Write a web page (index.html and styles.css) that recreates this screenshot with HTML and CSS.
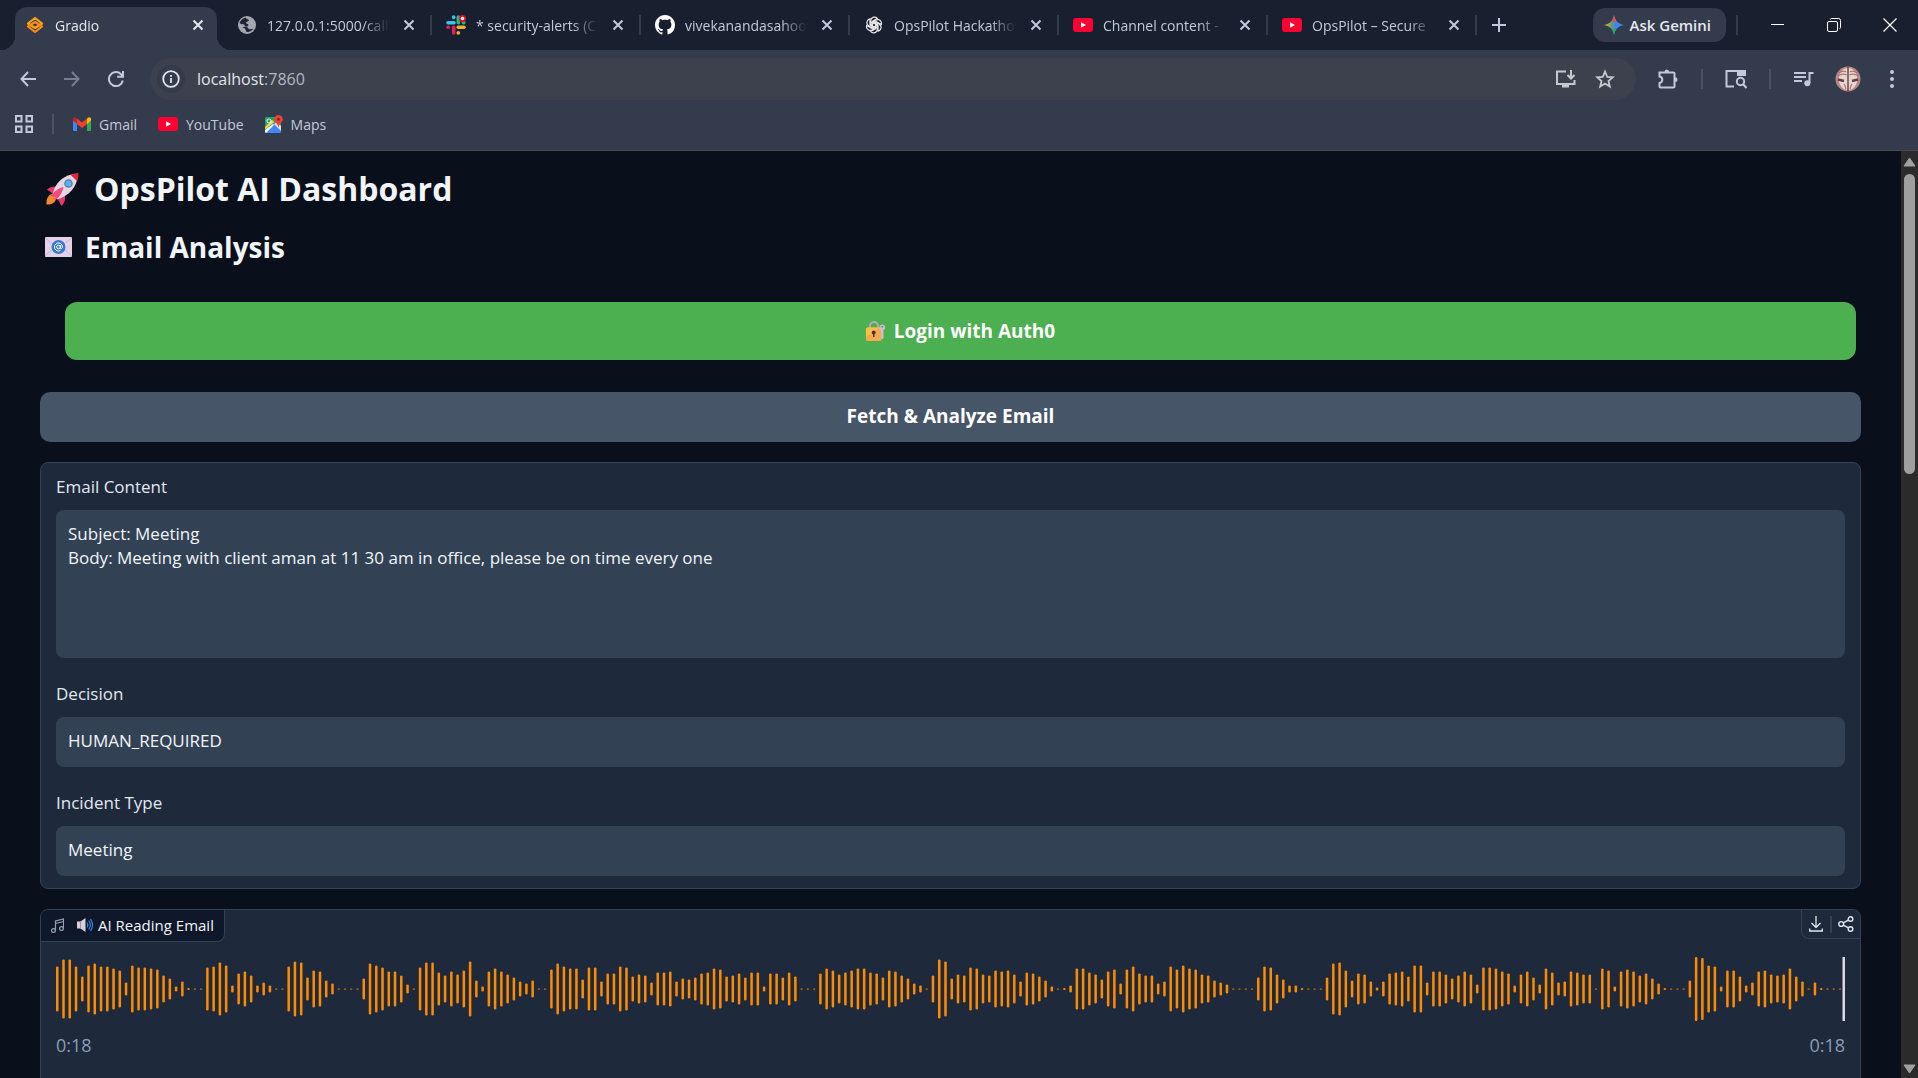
FILE: index.html
```
<!DOCTYPE html>
<html lang="en">
<head>
    <meta charset="UTF-8">
    <meta name="viewport" content="width=device-width, initial-scale=1.0">
    <title>Gradio</title>
    <link rel="stylesheet" href="styles.css">
</head>
<body>
<svg class="defs" aria-hidden="true">
    <symbol id="i-close" viewBox="0 0 12 12"><path d="M1.5 1.5l9 9M10.5 1.5l-9 9" fill="none" stroke="currentColor" stroke-width="2"/></symbol>
    <symbol id="i-youtube" viewBox="0 0 20 14"><rect width="20" height="14" rx="3" fill="#ff0033"/><path d="M8 4.2v5.6L13 7z" fill="#fff"/></symbol>
</svg>

<header class="browser">
    <div class="tabstrip">
        <div class="tab active">
            <svg class="favicon" viewBox="0 0 20 20"><g fill="none" stroke-width="2.200" stroke-linejoin="round"><path d="M3 8.500l7-5.500 7 5.500-7 4.500z" stroke="#ffa50f"/><path d="M3 11.500L10 7l7 4.500-7 5.500z" stroke="#ff8c0a"/></g></svg>
            <span class="tab-title">Gradio</span>
            <button class="tab-close" aria-label="Close tab"><svg><use href="#i-close"/></svg></button>
        </div>
        <div class="tab">
            <svg class="favicon" viewBox="0 0 20 20"><circle cx="10" cy="10" r="9" fill="#a4a8ad"/><path d="M9 2.5c-3 .5-5.5 2.500-6.500 5.500 1.500 1.500 3 1 4.500 1.500 1 .5.5 2 2 2 1.500.2 2.500-.5 2.500-1.800-1-1.200-2.500-.7-2.500-2 .5-1.300 2.500-1 3-2.700C11.500 4 9 4.500 9 2.500zM5 12.500c1.500.3 3 .5 3.500 2 .3 1 .2 2 1.500 2.500 2.500.2 4.500-1 6-3-1.500-.5-2 .5-3.500.2-1.500-.5-1.200-1.700-3-2.200-1.500-.3-3-.2-4.500.5z" fill="#1d2636"/></svg>
            <span class="tab-title">127.0.0.1:5000/call</span>
            <button class="tab-close" aria-label="Close tab"><svg><use href="#i-close"/></svg></button>
        </div>
        <div class="tab">
            <svg class="favicon" viewBox="0 0 20 20"><g stroke-width="3.600" stroke-linecap="round" fill="none"><path d="M2 7.700h6" stroke="#36c5f0"/><path d="M7.700 2v.5" stroke="#36c5f0"/><path d="M12.300 2v5.700" stroke="#2eb67d"/><path d="M17.500 7.700h.3" stroke="#2eb67d"/><path d="M12.300 12.300h5.700" stroke="#ecb22e"/><path d="M12.300 17.700v.2" stroke="#ecb22e"/><path d="M7.700 12.300V18" stroke="#e01e5a"/><path d="M2 12.300h.3" stroke="#e01e5a"/></g><circle cx="16.500" cy="3.500" r="3.500" fill="#e3122b"/><circle cx="16.500" cy="3.500" r="1.700" fill="#fff"/></svg>
            <span class="tab-title">* security-alerts (C</span>
            <button class="tab-close" aria-label="Close tab"><svg><use href="#i-close"/></svg></button>
        </div>
        <div class="tab">
            <svg class="favicon" viewBox="0 0 16 16"><path fill="#fff" d="M8 0C3.580 0 0 3.580 0 8c0 3.540 2.290 6.530 5.470 7.590.4.070.55-.17.55-.38 0-.19-.01-.82-.01-1.490-2.010.37-2.530-.49-2.690-.94-.09-.23-.48-.94-.82-1.130-.28-.15-.68-.52-.01-.53.63-.01 1.080.58 1.230.82.72 1.210 1.870.87 2.330.66.07-.52.28-.87.51-1.070-1.780-.2-3.640-.89-3.640-3.950 0-.87.31-1.590.82-2.150-.08-.2-.36-1.020.08-2.120 0 0 .67-.21 2.200.82.64-.18 1.320-.27 2-.27s1.360.09 2 .27c1.530-1.040 2.200-.82 2.200-.82.44 1.100.16 1.920.08 2.120.51.56.82 1.270.82 2.150 0 3.070-1.870 3.750-3.650 3.950.29.25.54.73.54 1.480 0 1.070-.01 1.930-.01 2.200 0 .21.15.46.55.38A8 8 0 0 0 16 8c0-4.420-3.580-8-8-8z"/></svg>
            <span class="tab-title">vivekanandasahoo</span>
            <button class="tab-close" aria-label="Close tab"><svg><use href="#i-close"/></svg></button>
        </div>
        <div class="tab">
            <svg class="favicon" viewBox="0 0 24 24"><g fill="none" stroke="#e8e8e8" stroke-width="1.500"><path id="petal" d="M8 14.300V7.500c0-2.900 2-4.900 4.500-4.900 1.400 0 2.500.5 3.400 1.500L10 7.600v6.900"/><use href="#petal" transform="rotate(60 12 12)"/><use href="#petal" transform="rotate(120 12 12)"/><use href="#petal" transform="rotate(180 12 12)"/><use href="#petal" transform="rotate(240 12 12)"/><use href="#petal" transform="rotate(300 12 12)"/></g></svg>
            <span class="tab-title">OpsPilot Hackatho</span>
            <button class="tab-close" aria-label="Close tab"><svg><use href="#i-close"/></svg></button>
        </div>
        <div class="tab">
            <svg class="favicon"><use href="#i-youtube"/></svg>
            <span class="tab-title">Channel content -</span>
            <button class="tab-close" aria-label="Close tab"><svg><use href="#i-close"/></svg></button>
        </div>
        <div class="tab">
            <svg class="favicon"><use href="#i-youtube"/></svg>
            <span class="tab-title">OpsPilot – Secure</span>
            <button class="tab-close" aria-label="Close tab"><svg><use href="#i-close"/></svg></button>
        </div>
        <button class="new-tab" aria-label="New tab"><svg width="14" height="14" viewBox="0 0 14 14"><path d="M7 0v14M0 7h14" stroke="currentColor" stroke-width="2"/></svg></button>
        <div class="window-controls">
            <button class="gemini">
                <svg width="20" height="20" viewBox="0 0 20 20"><defs><linearGradient id="gem" x1="0" y1="0" x2="1" y2="0"><stop offset="0" stop-color="#fbbc04"/><stop offset=".4" stop-color="#5d9a7d"/><stop offset=".6" stop-color="#3f83f8"/><stop offset="1" stop-color="#3f83f8"/></linearGradient></defs><path d="M10 0c1 5.500 4 9 10 10-6 1-9 4.500-10 10C9 14.500 6 11 0 10 6 9 9 5.500 10 0z" fill="url(#gem)"/><path d="M10 0c.6 3 1.500 5 3 6.700-2-.7-4.500-.7-6 .3C8.500 5 9.400 3 10 0z" fill="#ea4b4b"/><path d="M10 20c.5-3 1.400-4.800 2.700-6.300-2 .3-4 0-5.400-.7C8.600 15 9.500 17 10 20z" fill="#34a853"/></svg>
                Ask Gemini
            </button>
            <span class="divider"></span>
            <button class="win" aria-label="Minimize"><svg width="14" height="14" viewBox="0 0 14 14"><path d="M0 6.500h13" stroke="currentColor"/></svg></button>
            <button class="win" aria-label="Restore"><svg width="14" height="14" viewBox="0 0 14 14" fill="none" stroke="currentColor"><rect x=".5" y="3.500" width="10" height="10" rx="1.500"/><path d="M3.500 1.500q0-1 1-1h7q2 0 2 2v7q0 1-1 1"/></svg></button>
            <button class="win" aria-label="Close"><svg width="14" height="14" viewBox="0 0 14 14"><path d="M.5.5l13 13M13.500.5l-13 13" stroke="currentColor" stroke-width="1.200"/></svg></button>
        </div>
    </div>

    <div class="toolbar">
        <button class="nav" aria-label="Back"><svg width="16" height="16" viewBox="0 0 16 16"><path d="M16 8H1.500M8 1L1.500 8 8 15" fill="none" stroke="currentColor" stroke-width="2"/></svg></button>
        <button class="nav dim" aria-label="Forward"><svg width="16" height="16" viewBox="0 0 16 16"><path d="M0 8h14.500M8 1l6.500 7L8 15" fill="none" stroke="currentColor" stroke-width="2"/></svg></button>
        <button class="nav" aria-label="Reload"><svg width="16" height="16" viewBox="0 0 16 16"><path d="M14.800 9.500A7 7 0 1 1 13 3.200L15 5.500M15 0v5.800H9.200" fill="none" stroke="currentColor" stroke-width="2"/></svg></button>
        <div class="omnibox">
            <button class="site-info" aria-label="Site information"><svg width="18" height="18" viewBox="0 0 18 18"><circle cx="9" cy="9" r="7.800" fill="none" stroke="currentColor" stroke-width="1.800"/><path d="M9 8v5M9 5v1.700" stroke="currentColor" stroke-width="1.800"/></svg></button>
            <div class="url">localhost<span>:7860</span></div>
            <button class="omni-btn" aria-label="Install app"><svg width="21" height="18" viewBox="0 0 21 18"><path d="M11 1.500H2v12.500h17.500V10" fill="none" stroke="currentColor" stroke-width="2"/><path d="M7 14h7v3.500H7z" fill="currentColor"/><path d="M16 0v8M12.500 5L16 8.500 19.500 5" fill="none" stroke="currentColor" stroke-width="2"/></svg></button>
            <button class="omni-btn" aria-label="Bookmark this tab"><svg width="20" height="20" viewBox="0 0 20 20"><path d="M10 2.500l2.200 5.300 5.600.5-4.300 3.700 1.300 5.500L10 14.600l-4.800 2.900L6.500 12 2.200 8.300l5.600-.5z" fill="none" stroke="currentColor" stroke-width="1.800"/></svg></button>
        </div>
        <div class="toolbar-actions">
            <button class="action" aria-label="Extensions"><svg width="22" height="22" viewBox="0 0 22 22"><path d="M2.500 4.500h14q1 0 1 1v13q0 1-1 1h-13q-1 0-1-1v-3.500q2.800-.6 2.800-3.300T2.500 8.500z" fill="none" stroke="currentColor" stroke-width="2"/><path d="M7.500 4q0-2.500 2.300-2.500T12.100 4zM18 9.300q2.500 0 2.500 2.400T18 14.100z" fill="currentColor"/></svg></button>
            <span class="divider"></span>
            <button class="action" aria-label="Lens search"><svg width="22" height="20" viewBox="0 0 22 20"><path d="M9 17.500H1.500V2H20v5" fill="none" stroke="currentColor" stroke-width="2"/><path d="M12 1h9v6h-9z" fill="currentColor"/><circle cx="15.500" cy="12.500" r="3.700" fill="none" stroke="currentColor" stroke-width="2"/><path d="M18 15l3.500 4" stroke="currentColor" stroke-width="2"/></svg></button>
            <span class="divider"></span>
            <button class="action" aria-label="Media"><svg width="20" height="16" viewBox="0 0 20 16"><path d="M0 2h12M0 6h12M0 10h8" stroke="currentColor" stroke-width="2"/><path d="M15.500 12V2h4" fill="none" stroke="currentColor" stroke-width="2"/><circle cx="13.300" cy="12.300" r="3" fill="currentColor"/></svg></button>
            <button class="action" aria-label="Profile"><svg width="26" height="26" viewBox="0 0 26 26"><circle cx="13" cy="13" r="12.500" fill="#b98683"/><ellipse cx="13" cy="13" rx="9.500" ry="11" fill="#ead5cb"/><path d="M13 1v24" stroke="#6d4f58" stroke-width="1.600"/><path d="M3 10q4-3 8.500-1M23 10q-4-3-8.500-1M4 7q4-3 7-1M22 7q-4-3-7-1M9 18q1.500 2 2 5M17 18q-1.500 2-2 5" fill="none" stroke="#a87572" stroke-width="1.200"/><path d="M3 13.500l6 1.500M23 13.500L17 15" stroke="#54424f" stroke-width="2.400"/></svg></button>
            <button class="action" aria-label="Menu"><svg width="4" height="18" viewBox="0 0 4 18" fill="currentColor"><circle cx="2" cy="2" r="2"/><circle cx="2" cy="9" r="2"/><circle cx="2" cy="16" r="2"/></svg></button>
        </div>
    </div>

    <nav class="bookmarks">
        <button class="apps" aria-label="Tab groups"><svg width="18" height="18" viewBox="0 0 18 18" fill="none" stroke="currentColor" stroke-width="2"><path d="M1 1h5.500v5.500H1zM11.500 1H17v5.500h-5.500zM1 11.500h5.500V17H1zM11.500 11.500H17V17h-5.500z"/></svg></button>
        <span class="divider"></span>
        <a href="#"><svg width="18" height="14" viewBox="0 0 18 14"><path d="M0 2v11q0 1 1 1h3V5z" fill="#4285f4"/><path d="M18 2v11q0 1-1 1h-3V5z" fill="#34a853"/><path d="M14 1.500L15.500.4Q18-.5 18 2v1.500L14 7z" fill="#fbbc04"/><path d="M4 1.500L2.500.4Q0-.5 0 2v1.500L4 7z" fill="#c5221f"/><path d="M4 1.500l5 4 5-4V7l-5 4-5-4z" fill="#ea4335"/></svg>Gmail</a>
        <a href="#"><svg width="20" height="14"><use href="#i-youtube"/></svg>YouTube</a>
        <a href="#"><svg width="18" height="18" viewBox="0 0 18 18"><rect y="2" width="16" height="16" rx="1.500" fill="#1fa463"/><path d="M0 16.500L9 8l7 8v.5q0 1.500-1.500 1.500h-13Q0 18 0 16.500z" fill="#4285f4"/><path d="M9 9l7 7V11l-4-4z" fill="#dfe3e8"/><path d="M8 9l-8 6v2l1 1 8-8z" fill="#fff"/><path d="M9.500 7L0 14.500V12l7-7z" fill="#fbd34b"/><circle cx="4" cy="6" r="2" fill="none" stroke="#d9f2e5" stroke-width="1.200"/><path d="M13.500 0a4.300 4.300 0 0 1 4.300 4.300c0 3.200-3.300 3.700-4.300 8.200-1-4.500-4.300-5-4.300-8.200A4.300 4.300 0 0 1 13.500 0z" fill="#ea4335"/><circle cx="13.500" cy="4.300" r="1.500" fill="#8c1f17"/></svg>Maps</a>
    </nav>
</header>

<div class="viewport">
    <main class="dashboard">
        <h1>
            <svg width="36" height="36" viewBox="0 0 36 36"><path d="M8 23c-5 .5-7 5-6.500 10.500C6.500 34 11 31.500 11 27z" fill="#f28a2e"/><path d="M12 15.500c-4-.3-7.500.5-10 3l7 5zM20 24.500c.5 4-.5 7.500-3.500 10.500L12 26.500z" fill="#ef3569"/><path d="M7.500 23.500C10 12 18 3.500 33 2.500 32.500 16 24 25 12 28.500z" fill="#e4d7e4"/><path d="M25.500 3.800Q29 2.500 33.500 2.300q0 4.500-1.300 8z" fill="#e5263f"/><path d="M18.500 16C13 17.500 9.500 20 6 25l4.500 1L9 29.500C14 27 17 22.500 18.500 16z" fill="#f5487e"/><circle cx="23.500" cy="12.500" r="4.300" fill="#5f7ea8"/><circle cx="23.500" cy="12.500" r="3" fill="#55b1f5"/></svg>
            OpsPilot AI Dashboard
        </h1>
        <h2>
            <svg width="27" height="20" viewBox="0 0 27 20"><rect width="27" height="20" rx="1" fill="#e2d3ea"/><path d="M0 1l13.500 10L27 1M0 19l10-9M27 19l-10-9" fill="none" stroke="#c9b5d6"/><circle cx="13.500" cy="10" r="7" fill="#3b79d1"/><circle cx="13.500" cy="10" r="1.800" fill="none" stroke="#fff"/><path d="M15.300 8v3q.3 1 1.300.6 1-.8.8-2.300a4 4 0 1 0-2 4.200" fill="none" stroke="#fff"/></svg>
            Email Analysis
        </h2>

        <a class="login" href="#">
            <svg width="20" height="20" viewBox="0 0 20 20"><path d="M4 8V5a4 4 0 0 1 8 0v3" fill="none" stroke="#b7a9bf" stroke-width="1.800"/><rect y="6.500" width="15.500" height="13.500" rx="1.500" fill="#f9a84a"/><path d="M0 8q0-1.500 1.500-1.500H14L0 16z" fill="#fdbf4a"/><circle cx="7.700" cy="11.500" r="2" fill="#4a3240"/><path d="M7 12h1.500v4H7z" fill="#4a3240"/><path d="M16.200 3.500a3 3 0 0 1 1.300 5.700V17l-1.200 1.500L15 17V9.200a3 3 0 0 1 1.200-5.700z" fill="#c9bfd3"/><circle cx="16.200" cy="5.700" r=".9" fill="#6b8f63"/></svg>
            Login with Auth0
        </a>
        <button class="fetch">Fetch &amp; Analyze Email</button>

        <section class="panel form">
            <label for="email">Email Content</label>
            <textarea id="email" rows="5" readonly>Subject: Meeting
Body: Meeting with client aman at 11 30 am in office, please be on time every one</textarea>
            <label for="decision">Decision</label>
            <input id="decision" type="text" value="HUMAN_REQUIRED" readonly>
            <label for="incident">Incident Type</label>
            <input id="incident" type="text" value="Meeting" readonly>
        </section>

        <section class="panel audio">
            <div class="audio-head">
                <div class="audio-label">
                    <svg width="13" height="15" viewBox="0 0 13 15" fill="none" stroke="#94a3b8" stroke-width="1.200"><path d="M4.500 12.500V3l8-2v9.500M4.500 5.500l8-2"/><circle cx="2.500" cy="12.500" r="1.900"/><circle cx="10.500" cy="10.500" r="1.900"/></svg>
                    <svg width="16" height="14" viewBox="0 0 16 14"><path d="M0 3.500h3.500L8.500 0v14l-5-3.500H0z" fill="#d8cfdc"/><path d="M3.500 3.500v7" stroke="#9f93a6"/><path d="M10 4.500q1.500 2.500 0 5M11.800 2.500q3 4.500 0 9M13.500 1q4 6 0 12" fill="none" stroke="#2f86dd" stroke-width="1.200"/></svg>
                    <span>AI Reading Email</span>
                </div>
                <div class="audio-tools">
                    <button aria-label="Download"><svg width="14" height="16" viewBox="0 0 14 16" fill="none" stroke="currentColor" stroke-width="1.300"><path d="M7 0v11.500M2.500 7L7 11.500 11.500 7M.7 12.500V15h12.600v-2.500"/></svg></button>
                    <span class="tool-divider"></span>
                    <button aria-label="Share"><svg width="16" height="16" viewBox="0 0 16 16" fill="none" stroke="currentColor" stroke-width="1.400"><circle cx="3.200" cy="8" r="2.400"/><circle cx="12.500" cy="3" r="2.300"/><circle cx="12.500" cy="13" r="2.300"/><path d="M5.300 6.900l5-2.800M5.300 9.100l5 2.800"/></svg></button>
                </div>
            </div>
            <svg id="waveform" class="waveform" preserveAspectRatio="none"></svg>
            <div class="times">
                <time>0:18</time>
                <time>0:18</time>
            </div>
        </section>
    </main>

    <div class="scrollbar">
        <svg width="13" height="10" viewBox="0 0 13 10"><path d="M6.500 1l5.500 8H1z" fill="#a0a0a0" stroke="#a0a0a0" stroke-linejoin="round"/></svg>
        <div class="track"><div class="thumb"></div></div>
        <svg width="13" height="10" viewBox="0 0 13 10"><path d="M6.500 9L1 1h11z" fill="#a0a0a0" stroke="#a0a0a0" stroke-linejoin="round"/></svg>
    </div>
</div>

<script>
    // bar heights of the audio clip
    const peaks = [
        45, 59, 59, 45, 25, 47, 51, 45, 45, 41, 37, 13, 47, 43, 43, 41, 39, 27, 21, 5, 15, 2, 1, 1,
        43, 45, 53, 47, 7, 31, 35, 27, 7, 13, 7, 1, 1, 45, 55, 53, 23, 37, 35, 17, 11, 1, 1, 1, 1,
        21, 51, 47, 43, 35, 35, 27, 9, 1, 43, 53, 53, 33, 27, 35, 29, 37, 55, 17, 5, 35, 41, 35, 29,
        23, 15, 11, 17, 1, 1, 39, 51, 45, 41, 41, 19, 43, 43, 15, 31, 31, 45, 43, 25, 29,
        27, 13, 33, 33, 35, 15, 21, 19, 23, 31, 33, 41, 39, 25, 27, 31, 23, 33, 33, 5, 31, 31, 23,
        33, 25, 1, 1, 1, 31, 41, 37, 29, 33, 37, 41, 41, 33, 31, 23, 37, 35, 27, 21, 11, 7, 1, 27,
        59, 55, 21, 29, 27, 43, 41, 29, 27, 37, 35, 37, 29, 15, 33, 31, 25, 17, 5, 1, 2, 7, 41, 41,
        33, 29, 19, 35, 39, 11, 39, 45, 31, 27, 27, 11, 15, 45, 39, 47, 41, 39, 29, 27, 17, 13, 9,
        1, 1, 1, 1, 23, 45, 43, 29,
        19, 7, 7, 2, 1, 1, 1, 23, 51, 53, 37, 17, 31, 29, 15, 3, 15, 31, 33, 35, 25, 47, 47, 13, 35,
        35, 29, 21, 27, 35, 29, 9, 43, 43, 41, 35, 31, 7, 29, 35, 23, 9, 41, 33, 13, 15, 35, 33, 29,
        29, 1, 41, 37, 5, 35, 39, 35, 27, 31, 21, 11, 2, 1, 1, 1, 17, 64, 62, 47, 45, 5, 37, 37, 25,
        7, 13, 35, 37, 29, 27, 29, 41, 25, 15, 1, 13, 2, 1, 1, 1
    ];
    const step = 5;
    const height = 64;
    const wave = document.getElementById("waveform");
    wave.setAttribute("viewBox", `0 0 ${peaks.length * step} ${height}`);
    let bars = "";
    peaks.forEach((peak, i) => {
        bars += `<rect x="${i * step}" y="${(height - peak) / 2}" width="2" height="${peak}" rx="1" fill="#ff8c00"/>`;
    });
    bars += `<rect x="${peaks.length * step - 2}" y="0" width="2" height="${height}" fill="#ddd6e8"/>`;
    wave.innerHTML = bars;
</script>
</body>
</html>
```
FILE: styles.css
```
* {
    box-sizing: border-box;
}
body {
    margin: 0;
    height: 100vh;
    display: flex;
    flex-direction: column;
    overflow: hidden;
    background: #090f1b;
    color: #f1f5f9;
    font-family: "Open Sans", "Noto Sans", sans-serif;
}
button {
    display: flex;
    align-items: center;
    justify-content: center;
    padding: 0;
    border: 0;
    background: none;
    color: inherit;
    font: inherit;
}
a {
    color: inherit;
    text-decoration: none;
}
svg {
    flex: none;
}
.defs {
    display: none;
}

/* browser window */
.browser {
    flex: none;
    background: #333b4c;
    border-bottom: 1px solid #46494f;
    color: #c3c9dc;
    font-size: 14px;
}
.tabstrip {
    display: flex;
    height: 50px;
    padding-left: 15px;
    background: #18202f;
}
.tab {
    position: relative;
    display: flex;
    align-items: center;
    flex: 0 1 209px;
    min-width: 0;
    padding: 0 16px 0 14px;
}
.tab + .tab::after {
    content: "";
    position: absolute;
    right: 0;
    top: 15px;
    width: 2px;
    height: 20px;
    background: #333b4c;
}
.tab.active {
    flex-basis: 202px;
    margin: 7px 6px 0 0;
    padding: 0 12px 7px 10px;
    border-radius: 12px 12px 0 0;
    background: #333b4c;
    color: #e6e8ee;
}
.tab.active::before,
.tab.active::after {
    content: "";
    position: absolute;
    bottom: 0;
    width: 14px;
    height: 14px;
}
.tab.active::before {
    left: -14px;
    background: radial-gradient(circle at 0 0, transparent 14px, #333b4c 14px);
}
.tab.active::after {
    right: -14px;
    background: radial-gradient(circle at 100% 0, transparent 14px, #333b4c 14px);
}
.favicon {
    width: 20px;
    height: 20px;
}
.tab-title {
    flex: 1;
    min-width: 0;
    margin: 0 13px 0 10px;
    overflow: hidden;
    white-space: nowrap;
    -webkit-mask-image: linear-gradient(to left, transparent, #000 26px);
    mask-image: linear-gradient(to left, transparent, #000 26px);
}
.tab-close {
    width: 14px;
    height: 20px;
}
.tab-close svg {
    width: 12px;
    height: 12px;
}
.new-tab {
    width: 44px;
}
.window-controls {
    display: flex;
    align-items: center;
    margin-left: auto;
}
.gemini {
    gap: 6px;
    height: 34px;
    margin-right: 10px;
    padding: 0 15px 0 11px;
    border-radius: 12px;
    background: #333b4c;
    color: #e6e8ee;
    font-size: 15px;
    font-weight: 600;
}
.divider {
    width: 2px;
    height: 20px;
    background: #4a5265;
}
.window-controls .divider {
    margin-right: 12px;
    background: #333b4c;
}
.win {
    width: 56px;
    height: 50px;
    color: #fff;
}
.toolbar {
    display: flex;
    align-items: center;
    height: 58px;
    padding: 0 4px 0 6px;
}
.nav {
    width: 44px;
    height: 42px;
}
.nav.dim {
    color: #767e91;
}
.omnibox {
    display: flex;
    align-items: center;
    flex: 1;
    height: 42px;
    margin-left: 12px;
    padding: 0 11px 0 7px;
    border-radius: 21px;
    background: #3c414d;
    color: #e3e5ea;
}
.site-info {
    width: 28px;
    height: 28px;
    border-radius: 14px;
    background: #333b4c;
}
.url {
    flex: 1;
    margin-left: 12px;
    font-size: 16px;
}
.url span {
    color: #b4b8c2;
}
.omni-btn {
    width: 40px;
    height: 36px;
    color: #c9c7ce;
}
.toolbar-actions {
    display: flex;
    align-items: center;
    margin-left: 10px;
}
.action {
    width: 44px;
    height: 36px;
}
.toolbar-actions .divider {
    margin: 0 11px;
}
.bookmarks {
    display: flex;
    align-items: center;
    height: 42px;
    padding: 0 15px 10px;
}
.bookmarks .divider {
    margin: 0 19px;
}
.bookmarks a {
    display: flex;
    align-items: center;
    gap: 8px;
    margin-right: 21px;
}

/* page */
.viewport {
    display: flex;
    flex: 1;
    min-height: 0;
}
.dashboard {
    flex: 1;
    padding: 15px 40px 0;
}
h1, h2 {
    display: flex;
    align-items: center;
    margin: 0;
    padding-left: 5px;
    font-weight: 700;
}
h1 {
    gap: 13px;
    font-size: 32px;
    line-height: 46px;
}
h2 {
    gap: 13px;
    margin-top: 14px;
    font-size: 28px;
    line-height: 42px;
}
.login {
    display: flex;
    align-items: center;
    justify-content: center;
    gap: 8px;
    height: 58px;
    margin: 34px 5px 32px 25px;
    border-radius: 12px;
    background: #4caf50;
    color: #fff;
    font-size: 19px;
    font-weight: 700;
}
.fetch {
    width: 100%;
    height: 50px;
    padding-bottom: 2px;
    border-radius: 10px;
    background: #475569;
    color: #fff;
    font-size: 19px;
    font-weight: 700;
}
.panel {
    margin-top: 20px;
    border: 1px solid #334155;
    border-radius: 8px;
    background: #1e293b;
}
.form {
    display: flex;
    flex-direction: column;
    padding: 12px 15px;
    font-size: 17px;
}
.form label {
    margin-bottom: 11px;
    line-height: 24px;
    color: #e2e8f0;
}
.form textarea,
.form input {
    width: 100%;
    padding: 12px;
    border: 0;
    border-radius: 8px;
    outline: 0;
    background: #334155;
    color: #f1f5f9;
    font: inherit;
    line-height: 24px;
}
.form textarea {
    height: 148px;
    margin-bottom: 24px;
    resize: none;
}
.form input {
    height: 50px;
    padding: 11px 12px 15px;
}
.form input:not(:last-child) {
    margin-bottom: 24px;
}
.audio {
    height: 300px;
}
.audio-head {
    display: flex;
    align-items: flex-start;
    justify-content: space-between;
    height: 47px;
}
.audio-label {
    display: flex;
    align-items: center;
    height: 32px;
    padding: 0 10px 1px;
    border-right: 1px solid #334155;
    border-bottom: 1px solid #334155;
    border-radius: 7px 0 8px 0;
    background: #0f172a;
    font-size: 15px;
}
.audio-label svg + svg {
    margin: 0 5px 0 13px;
}
.audio-tools {
    display: flex;
    align-items: center;
    gap: 2px;
    height: 29px;
    padding: 0 2px;
    border-left: 1px solid #334155;
    border-bottom: 1px solid #334155;
    border-radius: 0 7px 0 8px;
    color: #e2e8f0;
}
.audio-tools button {
    width: 24px;
    height: 24px;
}
.tool-divider {
    width: 2px;
    height: 17px;
    background: #334155;
}
.waveform {
    display: block;
    width: calc(100% - 30px);
    height: 64px;
    margin: 0 15px;
}
.times {
    display: flex;
    justify-content: space-between;
    padding: 12px 15px;
    color: #8b9db8;
    font-size: 18px;
    line-height: 24px;
}
.scrollbar {
    display: flex;
    flex-direction: column;
    align-items: center;
    width: 17px;
    padding: 6px 0 4px;
    background: #2b2b2b;
}
.track {
    flex: 1;
    width: 11px;
    margin: 7px 0;
}
.thumb {
    height: 34%;
    border-radius: 6px;
    background: #9f9f9f;
}
```
